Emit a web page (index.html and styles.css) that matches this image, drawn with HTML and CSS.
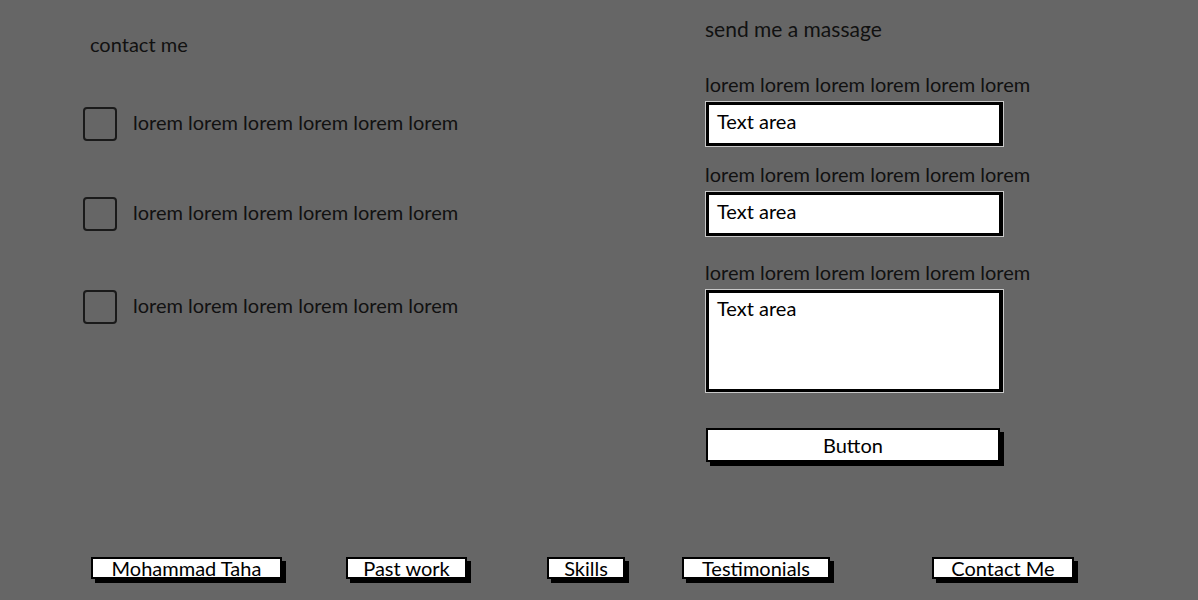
FILE: index.html
```html
<!DOCTYPE html>
<html lang="en">
<head>
<meta charset="utf-8">
<title>Contact</title>
<link rel="stylesheet" href="styles.css">
</head>
<body>
<div class="page">
  <main class="main">
    <section class="contact">
      <h2 class="contact-title">contact me</h2>
      <ul class="checks">
        <li class="check-row"><span class="box"></span><span class="check-label">lorem lorem lorem lorem lorem lorem</span></li>
        <li class="check-row"><span class="box"></span><span class="check-label">lorem lorem lorem lorem lorem lorem</span></li>
        <li class="check-row check-row-last"><span class="box"></span><span class="check-label">lorem lorem lorem lorem lorem lorem</span></li>
      </ul>
    </section>
    <section class="message">
      <h2 class="message-title">send me a massage</h2>
      <label class="field-label label-first">lorem lorem lorem lorem lorem lorem</label>
      <div class="field">Text area</div>
      <label class="field-label label-near">lorem lorem lorem lorem lorem lorem</label>
      <div class="field">Text area</div>
      <label class="field-label label-far">lorem lorem lorem lorem lorem lorem</label>
      <div class="field field-tall">Text area</div>
      <button class="send">Button</button>
    </section>
  </main>
  <nav class="footer">
    <a class="tab tab-name">Mohammad Taha</a>
    <a class="tab tab-work">Past work</a>
    <a class="tab tab-skills">Skills</a>
    <a class="tab tab-test">Testimonials</a>
    <a class="tab tab-contact">Contact Me</a>
  </nav>
</div>
</body>
</html>
```
FILE: styles.css
```css
* { box-sizing: border-box; }
html, body {
  margin: 0;
  padding: 0;
  background: #666666;
}
body {
  font-family: "Lato", "Noto Sans", sans-serif;
  color: #111;
  font-size: 20px;
}
.page {
  width: 1198px;
  height: 600px;
  display: flex;
  flex-direction: column;
}
.main {
  display: flex;
  flex: 1;
}
.contact {
  width: 705px;
  padding-left: 83px;
}
.contact-title {
  margin: 32px 0 0 7px;
  font-size: 20px;
  font-weight: normal;
  line-height: 24px;
}
.checks {
  list-style: none;
  margin: 51px 0 0;
  padding: 0;
  display: flex;
  flex-direction: column;
  gap: 56px;
}
.check-row {
  display: flex;
  align-items: center;
  gap: 16px;
  height: 34px;
}
.check-row-last { margin-top: 3px; }
.box {
  width: 34px;
  height: 34px;
  border: 2px solid #1a1a1a;
  border-radius: 4px;
}
.check-label { line-height: 24px; margin-top: -4px; }
.message {
  display: flex;
  flex-direction: column;
  align-items: flex-start;
}
.message-title {
  margin: 17px 0 0;
  font-size: 21px;
  font-weight: normal;
  line-height: 24px;
}
.field-label {
  display: block;
  line-height: 24px;
}
.label-first { margin-top: 31px; }
.label-near { margin-top: 16px; }
.label-far { margin-top: 24px; }
.field {
  width: 297px;
  height: 44px;
  margin: 6px 0 0 1px;
  background: #fff;
  border: 3px solid #000;
  border-right-width: 4px;
  box-shadow: 0 0 0 1px #c8c8c8;
  padding: 3px 8px;
  line-height: 26px;
  color: #000;
}
.field-tall { height: 102px; padding-top: 2px; }
.send {
  margin: 36px 0 0 1px;
  width: 294px;
  height: 34px;
  background: #fff;
  border: 2px solid #000;
  box-shadow: 4px 4px 0 #000;
  font: inherit;
  color: #000;
  line-height: 26px;
  padding: 0;
}
.footer {
  display: flex;
  align-items: flex-start;
  height: 43px;
  padding-left: 91px;
}
.tab {
  display: block;
  height: 22px;
  background: #fff;
  border: 2px solid #000;
  box-shadow: 4px 4px 0 #000;
  color: #000;
  text-align: center;
  line-height: 19px;
  font-size: 20px;
  white-space: nowrap;
}
.tab-name { width: 191px; }
.tab-work { width: 121px; margin-left: 64px; }
.tab-skills { width: 78px; margin-left: 80px; }
.tab-test { width: 148px; margin-left: 57px; }
.tab-contact { width: 142px; margin-left: 102px; }
```
